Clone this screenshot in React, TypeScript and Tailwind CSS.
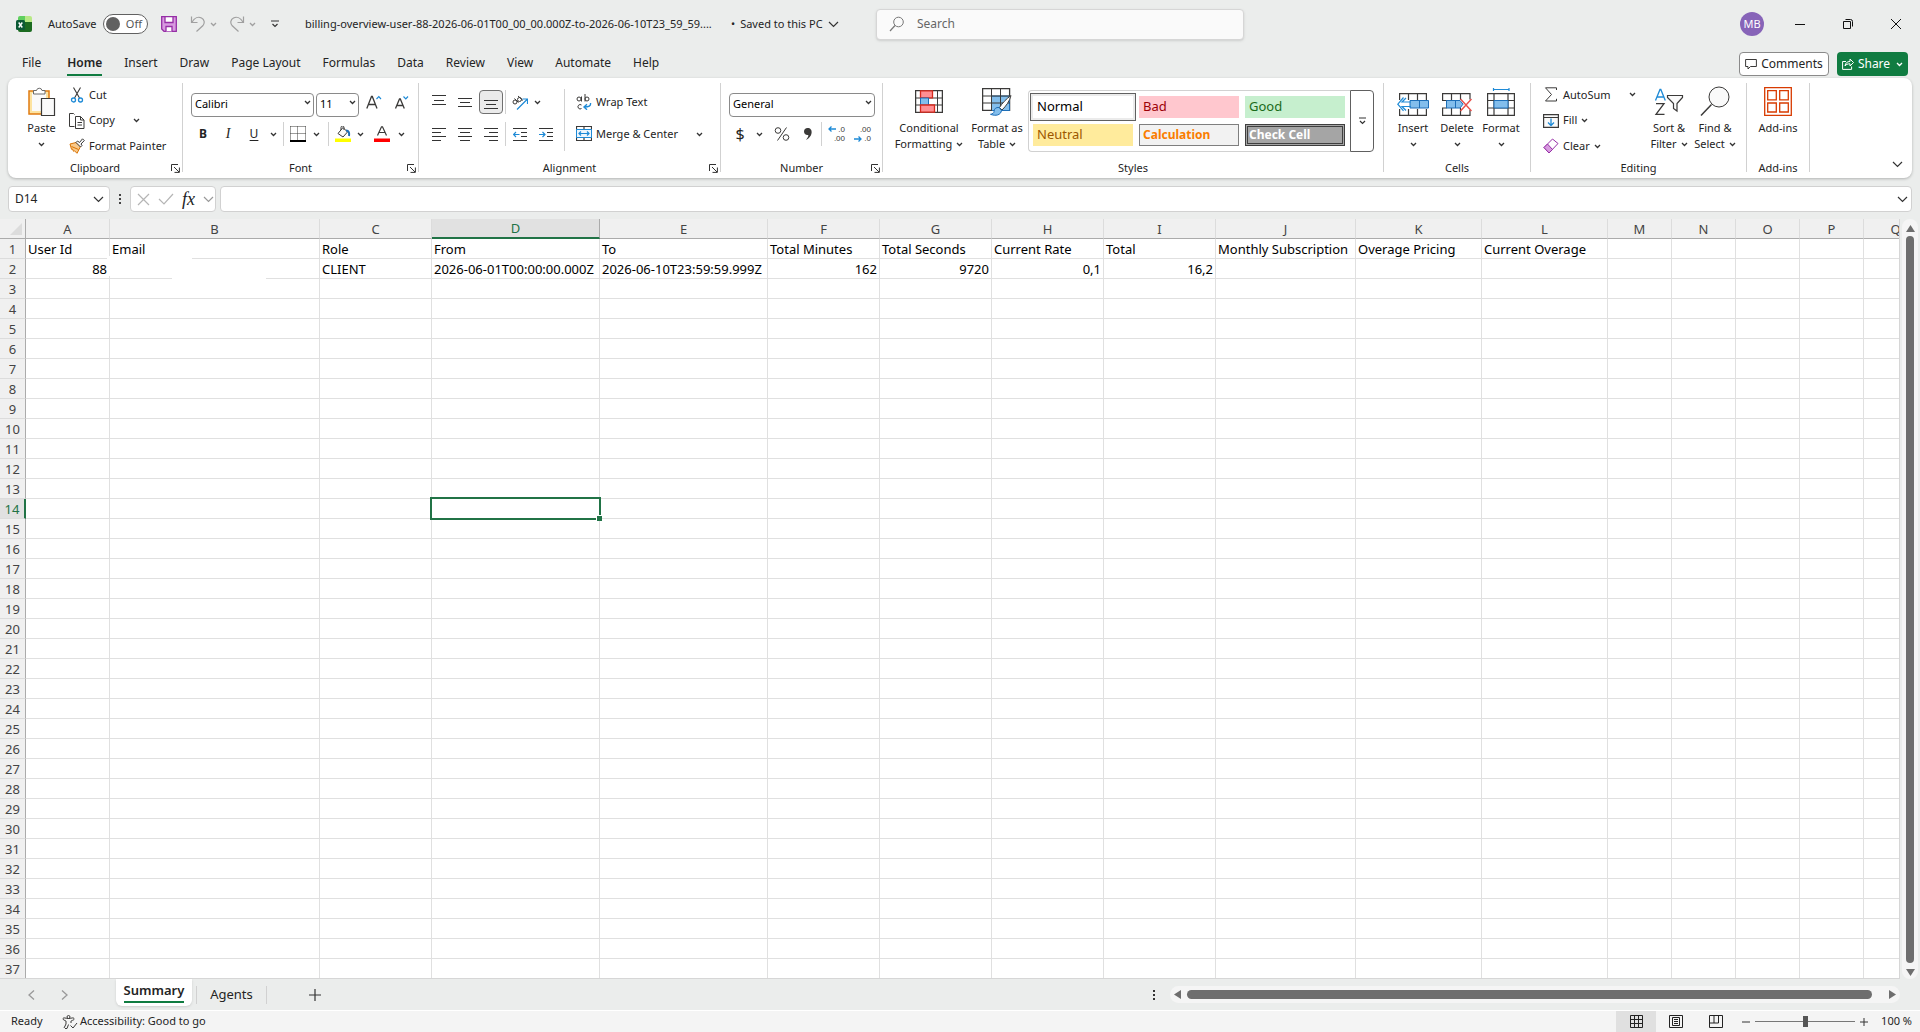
import type { ReactNode } from "react";
import clsx from "clsx";

const COLUMNS = [
  { name: "A", width: "w-[84px]" },
  { name: "B", width: "w-[210px]" },
  { name: "C", width: "w-[112px]" },
  { name: "D", width: "w-[168px]" },
  { name: "E", width: "w-[168px]" },
  { name: "F", width: "w-[112px]" },
  { name: "G", width: "w-[112px]" },
  { name: "H", width: "w-[112px]" },
  { name: "I", width: "w-[112px]" },
  { name: "J", width: "w-[140px]" },
  { name: "K", width: "w-[126px]" },
  { name: "L", width: "w-[126px]" },
  { name: "M", width: "w-16" },
  { name: "N", width: "w-16" },
  { name: "O", width: "w-16" },
  { name: "P", width: "w-16" },
  { name: "Q", width: "w-16" },
];

const CELLS: Record<string, string | number> = {
  A1: "User Id",
  B1: "Email",
  C1: "Role",
  D1: "From",
  E1: "To",
  F1: "Total Minutes",
  G1: "Total Seconds",
  H1: "Current Rate",
  I1: "Total",
  J1: "Monthly Subscription",
  K1: "Overage Pricing",
  L1: "Current Overage",
  A2: 88,
  C2: "CLIENT",
  D2: "2026-06-01T00:00:00.000Z",
  E2: "2026-06-10T23:59:59.999Z",
  F2: 162,
  G2: 9720,
  H2: "0,1",
  I2: "16,2",
};

const NUMERIC = ["A2", "F2", "G2", "H2", "I2"];
const ROWS = Array.from({ length: 37 }, (_, i) => i + 1);
const TABS = ["File", "Home", "Insert", "Draw", "Page Layout", "Formulas", "Data", "Review", "View", "Automate", "Help"];

/* ---------- Icons ---------- */

type IconProps = { w?: number; h?: number; className?: string; children: ReactNode };

const Icon = ({ w = 16, h = 16, className, children }: IconProps) => (
  <svg
    width={w}
    height={h}
    viewBox={`0 0 ${w} ${h}`}
    fill="none"
    stroke="#3b3a39"
    className={clsx("shrink-0", className)}
    aria-hidden="true"
  >
    {children}
  </svg>
);

const Chevron = ({ color = "#333" }: { color?: string }) => (
  <Icon w={7} h={5}>
    <path d="M1 1l2.5 2.5L6 1" stroke={color} strokeWidth="1.3" />
  </Icon>
);

const BigChevron = ({ color = "#333" }: { color?: string }) => (
  <Icon w={11} h={7}>
    <path d="M1 1l4.5 4.5L10 1" stroke={color} strokeWidth="1.2" />
  </Icon>
);

const ExcelLogo = () => (
  <Icon>
    <path d="M4 0h5v6H2V2a2 2 0 0 1 2-2z" fill="#5fcf5f" stroke="none" />
    <path d="M9 0h5a2 2 0 0 1 2 2v4H9z" fill="#b8e986" stroke="none" />
    <path d="M2 6h14v8a2 2 0 0 1-2 2H4a2 2 0 0 1-2-2z" fill="#1b6b20" stroke="none" />
    <rect x="0" y="4" width="9" height="10" rx="1.5" fill="#0b5a35" stroke="none" />
    <path d="M2.7 6.5l3.6 5M6.3 6.5l-3.6 5" stroke="#fff" strokeWidth="1.4" />
  </Icon>
);

const SaveIcon = () => (
  <Icon>
    <path d="M.7.7h14.6v14.6H3L.7 13z" fill="#d89be0" stroke="#962fa6" strokeWidth="1.3" />
    <path d="M4 .7h8v5.8H4z" fill="#fff" stroke="#962fa6" strokeWidth="1.3" />
    <path d="M5 15.3v-4.8h6v4.8" fill="#fff" stroke="#962fa6" strokeWidth="1.3" />
  </Icon>
);

const UndoIcon = ({ flip }: { flip?: boolean }) => (
  <Icon className={flip ? "-scale-x-100" : undefined}>
    <path d="M1.5.5v6h6M2 6.2C4.5 1.5 8.5.5 11.500 2c3 1.6 3.5 5 1.5 7.500L6.5 15.5" stroke="#a0a0a0" strokeWidth="1.2" />
  </Icon>
);

const PasteIcon = () => (
  <Icon w={28} h={31}>
    <path d="M1 5h20v23H1z" fill="#fde3a0" stroke="#e07b10" strokeWidth="1.5" />
    <path d="M4 7h14v18H4z" fill="#fafafa" stroke="none" />
    <path d="M5.5 8V4.500h3a2.8 2.8 0 0 1 5.5 0h3V8z" fill="#fff" stroke="#6b6b6b" />
    <path d="M13.5 12.5h13v17h-13z" fill="#fafafa" strokeWidth="1.2" />
  </Icon>
);

const CutIcon = () => (
  <Icon>
    <path d="M4.500.5l6 10.5M11.500.5l-6 10.5" strokeWidth="1.1" />
    <circle cx="4.5" cy="13" r="2" stroke="#1e8ad6" strokeWidth="1.3" />
    <circle cx="11.5" cy="13" r="2" stroke="#1e8ad6" strokeWidth="1.3" />
  </Icon>
);

const CopyIcon = () => (
  <Icon>
    <path d="M5.500 13.5h-5V.5h4l1 1M6.500 3.5h5l3.500 3.500v8.500H6.500z" />
    <path d="M11.500 3.500V7H15M8.500 9.500h4.500M8.500 12h4.500" />
  </Icon>
);

const PainterIcon = () => (
  <Icon>
    <path d="M1 6l6-1.5 4.500 4L8 15.300 5.500 12.800l-1 .5L3.500 11l-1 .3z" fill="#f9c98a" stroke="#d97200" />
    <path d="M2.500 8.500l7 3" stroke="#d97200" />
    <path d="M7 4.500L8.500 3l2 1.500L13.500.8l1.800 1.800-3.300 3.400 1 1.500L11.500 9z" fill="#fafafa" />
  </Icon>
);

const BordersIcon = () => (
  <Icon>
    <path d="M.5.5h15M.5 7.5h15M.5.5v14M7.5.5v14M15.5.5v14" strokeDasharray="1 1" />
    <path d="M0 15h16" stroke="#000" strokeWidth="2" />
  </Icon>
);

const FillIcon = () => (
  <Icon>
    <path d="M3 7.5l5-6 4.500 4.500-4.500 5z" fill="#fafafa" />
    <path d="M6 4V1.500a1.500 1.500 0 0 1 3 0V4" />
    <path d="M11 4.500c3 0 3.500 2.500 3 5.500" stroke="#1e6fb8" strokeWidth="2" />
    <path d="M0 12.500h16V16H0z" fill="#ff0" stroke="none" />
  </Icon>
);

const FontColorIcon = () => (
  <Icon>
    <path d="M3.500 9.500L7.500.8h1l4 8.700M5 6.500h6" strokeWidth="1.200" />
    <path d="M0 12.500h16V16H0z" fill="#f00" stroke="none" />
  </Icon>
);

const FontSizeIcon = ({ small }: { small?: boolean }) => (
  <Icon w={16} h={15}>
    {small ? (
      <>
        <path d="M1.5 13.500L5.500 4h.8l4 9.500M3 10.500h6" strokeWidth="1.300" />
        <path d="M9.500 1.500l2.300 2.300L14 1.500" stroke="#1e8ad6" strokeWidth="1.200" />
      </>
    ) : (
      <>
        <path d="M.8 13.500l4.700-12h.8l4.700 12M2.500 9.500h7" strokeWidth="1.300" />
        <path d="M10.500 4l2.300-2.300L15 4" stroke="#1e8ad6" strokeWidth="1.200" />
      </>
    )}
  </Icon>
);

const LinesIcon = ({ d }: { d: string }) => (
  <Icon w={14} h={14}>
    <path d={d} stroke="#333" />
  </Icon>
);

const OrientationIcon = () => (
  <Icon>
    <circle cx="3" cy="8" r="2" />
    <path d="M2.5 4.500l4 4M6 2l5 4.500" />
    <circle cx="7.5" cy="5.5" r="2" />
    <path d="M5 15.500L15.500 5M10.500 5h5v5" stroke="#1e8ad6" strokeWidth="1.200" />
  </Icon>
);

const IndentIcon = ({ increase }: { increase?: boolean }) => (
  <Icon w={14} h={14}>
    <path d="M0 1.500h14M8 5.500h6M8 9.500h6M0 13.500h14" stroke="#333" />
    <path
      d={increase ? "M0 7.500h6M3.500 5l2.500 2.500L3.500 10" : "M.5 7.500h6M3 5L.5 7.500 3 10"}
      stroke="#1e8ad6"
      strokeWidth="1.200"
    />
  </Icon>
);

const WrapIcon = () => (
  <Icon>
    <circle cx="3" cy="5" r="2" />
    <path d="M5.500 2.500v5M9 0v7.500" />
    <circle cx="11" cy="5" r="2" />
    <path d="M5.500 11a2.200 2.200 0 1 0 0 3.500" />
    <path d="M14.500 9c.5 3-1.500 4-6.500 4M11 10.300L8 13l3 2.700" stroke="#1e8ad6" strokeWidth="1.400" />
  </Icon>
);

const MergeIcon = () => (
  <Icon>
    <path d="M.5.5h15v14H.5zM8 .5v3M8 11.500v3" strokeWidth="1.200" />
    <path d="M.5 3.500h15v8H.5z" fill="#eef6fc" stroke="#1e8ad6" />
    <path d="M3 7.500h10M5 5.500l-2 2 2 2M11 5.500l2 2-2 2" stroke="#1e8ad6" strokeWidth="1.200" />
  </Icon>
);

const PercentIcon = () => (
  <Icon w={16} h={16}>
    <circle cx="4" cy="4.500" r="2.800" />
    <circle cx="12" cy="11.500" r="2.800" />
    <path d="M12.500 1.500l-9 13" />
  </Icon>
);

const CommaIcon = () => (
  <Icon w={10} h={14}>
    <path
      d="M4.500 1C7.500 1 9 3 8.600 6c-.4 3-2.600 5.500-5.600 7 1.500-2 2.500-3.500 2.300-5C3 8.500 1 7 1 4.500 1 2.500 2.500 1 4.500 1z"
      fill="#3b3a39"
      stroke="none"
    />
  </Icon>
);

const DecimalIcon = ({ decrease }: { decrease?: boolean }) => (
  <span className="relative flex h-[18px] w-4 flex-col justify-between font-['Liberation_Sans',sans-serif] text-[8px] leading-[9px] text-[#3b3a39]">
    <span className="block text-right">{decrease ? ".00" : ".0"}</span>
    <span className="block text-right">{decrease ? ".0" : ".00"}</span>
    <svg
      viewBox="0 0 8 6"
      fill="none"
      className={clsx("absolute -left-px h-[6px] w-2", decrease ? "bottom-px" : "top-px")}
    >
      <path d={decrease ? "M0 3h7M4.500.5L7 3 4.500 5.500" : "M8 3H1M3.500.5L1 3l2.500 2.500"} stroke="#1e8ad6" strokeWidth="1.300" />
    </svg>
  </span>
);

const ConditionalIcon = () => (
  <Icon w={28} h={23}>
    <path d="M.6.6h26.800v21.800H.6z" fill="#fff" strokeWidth="1.300" />
    <path d="M0 8h28M0 15h28M5.500 0v23M22.500 0v23" />
    <path d="M5.500.8h12v7h-12z" fill="#ff8f93" stroke="#d62a1e" strokeWidth="1.300" />
    <path d="M5.500 8h8v7h-8z" fill="#83beec" stroke="#1e6fb8" />
    <path d="M5.500 15h14v7.200h-14z" fill="#ff8f93" stroke="#d62a1e" strokeWidth="1.300" />
  </Icon>
);

const TableIcon = () => (
  <Icon w={30} h={28}>
    <path d="M.6.6h27v21.800H.6z" fill="#fff" strokeWidth="1.300" />
    <path d="M9.500 8h18v14.500h-18z" fill="#83beec" stroke="#1e6fb8" />
    <path d="M0 8h28M0 15h28M9.500 0v23M18.500 0v23" />
    <path d="M29 7.500c-5 3.500-9 8-11.500 12l2.500 2.500c4-4 7.500-8.500 9-14.500z" fill="#fff" />
    <path d="M17 19.500c-3-.5-5 1.500-5 4 0 1.500-1.500 2.500-3.500 2.800 5 2 10.500 1 11-4z" fill="#83beec" stroke="#1e6fb8" />
  </Icon>
);

const InsertIcon = () => (
  <Icon w={32} h={28}>
    <path d="M2.600 5.600h26.800v21.800H2.600zM11.500 5v22M20.500 5v22" strokeWidth="1.200" />
    <path d="M0 12h32v9H0z" fill="#fff" stroke="none" />
    <path d="M13 12.500h18.500V20H13z" fill="#83beec" stroke="#1e6fb8" />
    <path d="M22.500 12.500V20" stroke="#1e6fb8" />
    <path d="M14 14H5l4-4M14 18.500H5l4 4M6.500 9.500L.8 16.200l5.700 6.700" stroke="#1e8ad6" strokeWidth="1.200" />
  </Icon>
);

const DeleteIcon = () => (
  <Icon w={30} h={28}>
    <path
      d="M.6 12.500V5.600H28v6M.6 20v7.400H28V22M9.500 5v7M18.500 5v7M9.500 20v7.500M18.500 20v7.500M0 12.500h5M0 20h5"
      strokeWidth="1.200"
    />
    <path d="M4.500 12.500H18l3 3.700-3 3.800H4.500z" fill="#83beec" stroke="#1e6fb8" />
    <path d="M13.500 12.500V20" stroke="#1e6fb8" />
    <path d="M18.500 11l11 12M29.500 11l-11 12" stroke="#e8504a" strokeWidth="1.400" />
  </Icon>
);

const FormatIcon = () => (
  <Icon w={28} h={28}>
    <path d="M6.500 0v3M22 0v3M6.500 1.500H22" stroke="#1e8ad6" strokeWidth="1.200" />
    <path d="M.6 5.600h26.800v21.800H.6zM7 5v22M21 5v22M0 12.500h28M0 20h28" strokeWidth="1.200" />
    <path d="M7 12.500h14V20H7z" fill="#83beec" stroke="#1e6fb8" />
  </Icon>
);

const SumIcon = () => (
  <Icon w={16} h={15}>
    <path d="M13.500 3V.8h-11l6 6.700-6 6.500h11v-2.200" />
  </Icon>
);

const FillDownIcon = () => (
  <Icon w={16} h={14}>
    <path d="M.6.6h14.800v12.800H.6zM.5 3.500h15" fill="#fafafa" strokeWidth="1.200" />
    <path d="M8 4.500v7M5 8.500l3 3 3-3" stroke="#1e8ad6" strokeWidth="1.300" />
  </Icon>
);

const EraserIcon = () => (
  <Icon>
    <path d="M1 9.500L9.500 1 15 5.500 6 15z" fill="#fff" stroke="#962fa6" />
    <path d="M1 9.500L4.500 6l5 5.500L6 15z" fill="#d89be0" stroke="#962fa6" />
  </Icon>
);

const SortFilterIcon = () => (
  <Icon w={30} h={28}>
    <path d="M1.500 12.500L6 1.500h.8l4.500 11M3 9h7" stroke="#1e8ad6" strokeWidth="1.300" />
    <path d="M2 15.600h8L2 26.400h8.500" strokeWidth="1.300" />
    <path d="M13.500 7.500h15v2l-5.500 6V23l-3.500-2.500v-5l-6-6z" fill="#fafafa" strokeWidth="1.200" />
  </Icon>
);

const FindIcon = () => (
  <Icon w={30} h={31}>
    <circle cx="19" cy="11" r="10" fill="#fafafa" />
    <path d="M11.500 18.500L1 29.500" strokeWidth="1.500" />
  </Icon>
);

const AddInsIcon = () => (
  <Icon w={28} h={29}>
    <path
      d="M.7.7h26.600v27.600H.7zM3.700 3.700h8.600v9.100H3.700zM15.700 3.700h8.600v9.100h-8.600zM3.700 16h8.600v9H3.700zM15.700 16h8.600v9h-8.600z"
      stroke="#d83b01"
      strokeWidth="1.300"
    />
  </Icon>
);

const MagnifierIcon = () => (
  <Icon>
    <circle cx="9.500" cy="6" r="4.800" stroke="#777" />
    <path d="M6 9.500L1 15" stroke="#777" strokeWidth="1.200" />
  </Icon>
);

const Launcher = () => (
  <Icon w={9} h={9}>
    <path d="M.5 7V.5H7M3 3l5 5M8.400 3.500v4.900H3.500" stroke="#333" />
  </Icon>
);

/* ---------- Ribbon parts ---------- */

const Separator = ({ className = "h-[89px]" }: { className?: string }) => (
  <div className={clsx("w-px shrink-0 bg-[#d1d1d1]", className)} />
);

type GroupProps = { label: string; width: string; launcher?: boolean; children: ReactNode };

const Group = ({ label, width, launcher, children }: GroupProps) => (
  <>
    <section aria-label={label} className={clsx("flex shrink-0 flex-col", width)}>
      <div className="flex h-[77px]">{children}</div>
      <div className="relative h-4 text-center text-[11px] leading-4">
        {label}
        {launcher && (
          <button aria-label={`${label} settings`} className="absolute right-0.5 top-1">
            <Launcher />
          </button>
        )}
      </div>
    </section>
    <Separator />
  </>
);

type ToolProps = { label: string; width?: string; active?: boolean; children: ReactNode };

const Tool = ({ label, width = "w-[26px]", active, children }: ToolProps) => (
  <button
    aria-label={label}
    className={clsx(
      "flex h-6 shrink-0 items-center justify-center",
      width,
      active && "rounded border border-[#707070] bg-[#ebebeb]"
    )}
  >
    {children}
  </button>
);

type BigToolProps = { icon: ReactNode; width: string; lines: string[]; chevron?: "below" | "inline" };

const BigTool = ({ icon, width, lines, chevron }: BigToolProps) => (
  <button className={clsx("flex shrink-0 flex-col items-center text-[11px] leading-4", width)}>
    <span className="flex h-[37px] items-center justify-center">{icon}</span>
    {lines.map((line, i) => (
      <span key={line} className="flex items-center gap-1 whitespace-nowrap">
        {line}
        {chevron === "inline" && i === lines.length - 1 && <Chevron />}
      </span>
    ))}
    {chevron === "below" && (
      <span className="flex h-4 items-center">
        <Chevron />
      </span>
    )}
  </button>
);

const SmallTool = ({ icon, label, chevron }: { icon: ReactNode; label: string; chevron?: "near" | "far" }) => (
  <button className="flex h-[26px] items-center gap-1 whitespace-nowrap pb-0.5 text-[11px]">
    {icon}
    {label}
    {chevron && (
      <span className={chevron === "far" ? "ml-[14px]" : undefined}>
        <Chevron />
      </span>
    )}
  </button>
);

const Combo = ({ label, value, width }: { label: string; value: string; width: string }) => (
  <div className={clsx("relative h-6 shrink-0", width)}>
    <select
      aria-label={label}
      defaultValue={value}
      className="h-6 w-full appearance-none rounded border border-[#8a8a8a] bg-white pb-0.5 pl-[3px] text-[11px] text-black"
    >
      <option>{value}</option>
    </select>
    <span className="pointer-events-none absolute right-[3px] top-[10px]">
      <Chevron />
    </span>
  </div>
);

const ToolRows = ({ className, children }: { className?: string; children: ReactNode }) => (
  <div className={clsx("flex flex-col gap-2 pt-[7px]", className)}>{children}</div>
);

/* ---------- Sections ---------- */

const TitleBar = () => (
  <header className="flex h-12 shrink-0 items-center pl-4 text-[11px]">
    <ExcelLogo />
    <label htmlFor="autosave" className="ml-4 w-[55px]">
      AutoSave
    </label>
    <div className="relative h-5 w-[45px]">
      <input
        id="autosave"
        type="checkbox"
        className="block h-5 w-[45px] appearance-none rounded-full border border-[#616161] bg-white before:m-[2px] before:block before:h-[14px] before:w-[14px] before:rounded-full before:bg-[#616161]"
      />
      <span className="pointer-events-none absolute right-[6px] top-0 leading-5 text-[#555]">Off</span>
    </div>
    <button aria-label="Save" className="ml-[13px]">
      <SaveIcon />
    </button>
    <button aria-label="Undo" className="ml-[13px] flex items-center gap-1">
      <UndoIcon />
      <Chevron color="#a0a0a0" />
    </button>
    <button aria-label="Redo" className="ml-3 flex items-center gap-1">
      <UndoIcon flip />
      <Chevron color="#a0a0a0" />
    </button>
    <button aria-label="Customize Quick Access Toolbar" className="ml-[15px]">
      <Icon w={8} h={8}>
        <path d="M0 1h8M1.500 4L4 6.500 6.500 4" stroke="#333" strokeWidth="1.200" />
      </Icon>
    </button>
    <p className="ml-[26px] w-[422px] overflow-hidden whitespace-nowrap">
      billing-overview-user-88-2026-06-01T00_00_00.000Z-to-2026-06-10T23_59_59....
    </p>
    <button className="ml-1 flex w-[145px] items-center gap-[5px] whitespace-nowrap">
      <span>•</span>
      <span>Saved to this PC</span>
      <BigChevron />
    </button>
    <div className="flex h-[31px] w-[368px] items-center gap-3 rounded border border-[#d6d6d6] bg-[#fafafa] pl-3 shadow-sm">
      <MagnifierIcon />
      <input
        aria-label="Search"
        placeholder="Search"
        className="min-w-0 flex-1 bg-transparent text-xs placeholder:text-[#666]"
      />
    </div>
    <div className="ml-auto flex items-center">
      <span className="flex h-6 w-6 items-center justify-center rounded-full bg-[#8764b8] text-white">MB</span>
      <button aria-label="Minimize" className="flex w-[72px] justify-center">
        <Icon w={10} h={10}>
          <path d="M0 5.500h10" stroke="#111" />
        </Icon>
      </button>
      <button aria-label="Restore" className="flex w-6 justify-center">
        <Icon w={10} h={10}>
          <path d="M.5 2.500h7v7h-7zM2.500.5h5a2 2 0 0 1 2 2v5" stroke="#111" />
        </Icon>
      </button>
      <button aria-label="Close" className="ml-3 flex w-12 justify-center">
        <Icon w={10} h={10}>
          <path d="M0 0l10 10M10 0L0 10" stroke="#111" />
        </Icon>
      </button>
    </div>
  </header>
);

const TabBar = () => (
  <nav className="flex h-[30px] shrink-0 items-center pl-[11px] pr-3 pt-0.5">
    {TABS.map((tab) => (
      <button key={tab} className={clsx("px-[11px] text-xs", tab === "File" && "mr-1")}>
        <span
          className={clsx(
            "block border-b-2 leading-[22px]",
            tab === "Home" ? "border-[#107c41] font-semibold" : "border-transparent"
          )}
        >
          {tab}
        </span>
      </button>
    ))}
    <button className="ml-auto flex h-6 w-[90px] items-center justify-center gap-1 rounded border border-[#8a8a8a] bg-white text-xs">
      <Icon w={12} h={12}>
        <path d="M.6 1.500h10.800v7H5.500L3 11V8.500H.6z" />
      </Icon>
      Comments
    </button>
    <button className="ml-2 flex h-6 w-[71px] items-center justify-center gap-1 rounded bg-[#107c41] text-xs text-white">
      <Icon w={12} h={12}>
        <path
          d="M4 3.500H.6v7.900h9V8.500M3 8c.5-3 2-4.500 5-4.500V1l3.500 3.500L8 8V5.800C5.500 5.800 4 6.500 3 8z"
          stroke="#fff"
        />
      </Icon>
      Share
      <span className="ml-0.5">
        <Chevron color="#fff" />
      </span>
    </button>
  </nav>
);

const StylesGallery = () => (
  <div className="mt-[7px] flex h-[62px] shrink-0">
    <div className="grid w-[322px] grid-cols-[100px_100px_100px] grid-rows-[22px_22px] gap-[6px] rounded-l border border-r-0 border-[#d1d1d1] pl-1 pt-[5px] text-[13px] leading-5">
      <button className="bg-white pb-0.5 pl-1 text-left text-black outline outline-offset-2 outline-[#606060] ring-2 ring-[#ebebeb]">
        Normal
      </button>
      <button className="bg-[#ffc7ce] pb-0.5 pl-1 text-left text-[#9c0006]">Bad</button>
      <button className="bg-[#c6efce] pb-0.5 pl-1 text-left text-[#1a6b1a]">Good</button>
      <button className="bg-[#ffeb9c] pb-0.5 pl-1 text-left text-[#9c5700]">Neutral</button>
      <button className="border border-[#7f7f7f] bg-[#f2f2f2] pl-[3px] text-left text-xs font-bold text-[#fa7d00]">
        Calculation
      </button>
      <button className="border-[3px] border-double border-[#3f3f3f] bg-[#a5a5a5] pl-px text-left text-xs font-bold leading-4 text-white">
        Check Cell
      </button>
    </div>
    <button
      aria-label="More styles"
      className="flex w-6 items-center justify-center rounded-r border border-[#606060]"
    >
      <Icon w={7} h={8}>
        <path d="M0 1h7M1 4l2.500 2.500L6 4" stroke="#333" strokeWidth="1.200" />
      </Icon>
    </button>
  </div>
);

const Ribbon = () => (
  <div className="mx-2 flex h-[100px] shrink-0 rounded-lg bg-white pt-[5px] shadow-[0_1px_3px_rgba(0,0,0,0.25)]">
    <Group label="Clipboard" width="w-[174px]" launcher>
      <div className="flex w-[61px] shrink-0 justify-center pl-[6px]">
        <BigTool width="w-12" icon={<PasteIcon />} lines={["Paste"]} chevron="below" />
      </div>
      <div className="flex flex-col">
        <SmallTool icon={<CutIcon />} label="Cut" />
        <SmallTool icon={<CopyIcon />} label="Copy" chevron="far" />
        <SmallTool icon={<PainterIcon />} label="Format Painter" />
      </div>
    </Group>

    <Group label="Font" width="w-[235px]" launcher>
      <ToolRows className="pl-2">
        <div className="flex gap-0.5">
          <Combo label="Font" value="Calibri" width="w-[123px]" />
          <Combo label="Font size" value="11" width="w-[43px]" />
          <Tool label="Increase font size">
            <FontSizeIcon />
          </Tool>
          <Tool label="Decrease font size">
            <FontSizeIcon small />
          </Tool>
        </div>
        <div className="flex">
          <Tool label="Bold" width="w-6">
            <b className="text-xs">B</b>
          </Tool>
          <Tool label="Italic">
            <i className="font-['Liberation_Serif',serif] text-sm">I</i>
          </Tool>
          <Tool label="Underline">
            <u className="text-xs underline-offset-2">U</u>
          </Tool>
          <Tool label="Underline options" width="w-3">
            <Chevron />
          </Tool>
          <Separator className="mx-1 h-6" />
          <Tool label="Borders" width="w-5">
            <BordersIcon />
          </Tool>
          <Tool label="Border options" width="w-4">
            <Chevron />
          </Tool>
          <Separator className="mx-1 h-6" />
          <Tool label="Fill color" width="w-5">
            <FillIcon />
          </Tool>
          <Tool label="Fill color options" width="w-3.5">
            <Chevron />
          </Tool>
          <Tool label="Font color" width="w-[30px]">
            <FontColorIcon />
          </Tool>
          <Tool label="Font color options" width="w-2">
            <Chevron />
          </Tool>
        </div>
      </ToolRows>
    </Group>

    <Group label="Alignment" width="w-[301px]" launcher>
      <ToolRows className="w-[145px] shrink-0 pl-[7px]">
        <div className="flex">
          <Tool label="Top align">
            <LinesIcon d="M0 .5h14M2 5.500h10M0 9.500h14" />
          </Tool>
          <Tool label="Middle align">
            <LinesIcon d="M0 3.500h14M2 7.500h10M0 11.500h14" />
          </Tool>
          <Tool label="Bottom align" width="w-6 mx-px" active>
            <LinesIcon d="M0 5.500h14M2 9.500h10M0 13.500h14" />
          </Tool>
          <Separator className="mx-px h-6" />
          <Tool label="Orientation">
            <OrientationIcon />
          </Tool>
          <Tool label="Orientation options" width="w-2">
            <Chevron />
          </Tool>
        </div>
        <div className="flex">
          <Tool label="Align left">
            <LinesIcon d="M0 1.500h14M0 5.500h9M0 9.500h14M0 13.500h9" />
          </Tool>
          <Tool label="Center">
            <LinesIcon d="M0 1.500h14M2 5.500h10M0 9.500h14M2 13.500h10" />
          </Tool>
          <Tool label="Align right">
            <LinesIcon d="M0 1.500h14M5 5.500h9M0 9.500h14M5 13.500h9" />
          </Tool>
          <Separator className="mx-px h-6" />
          <Tool label="Decrease indent">
            <IndentIcon />
          </Tool>
          <Tool label="Increase indent">
            <IndentIcon increase />
          </Tool>
        </div>
      </ToolRows>
      <Separator className="mt-[6px] h-[62px]" />
      <div className="flex flex-col gap-[6px] pl-[11px] pt-[7px]">
        <SmallTool icon={<WrapIcon />} label="Wrap Text" />
        <SmallTool icon={<MergeIcon />} label="Merge & Center" chevron="far" />
      </div>
    </Group>

    <Group label="Number" width="w-[161px]" launcher>
      <ToolRows className="pl-2">
        <Combo label="Number format" value="General" width="w-[146px]" />
        <div className="flex">
          <Tool label="Accounting format" width="w-[22px]">
            <span className="text-base">$</span>
          </Tool>
          <Tool label="Accounting options" width="w-4">
            <Chevron />
          </Tool>
          <Tool label="Percent style" width="w-[30px]">
            <PercentIcon />
          </Tool>
          <Tool label="Comma style" width="w-[22px]">
            <CommaIcon />
          </Tool>
          <Separator className="mx-0.5 h-6" />
          <Tool label="Increase decimal">
            <DecimalIcon />
          </Tool>
          <Tool label="Decrease decimal">
            <DecimalIcon decrease />
          </Tool>
        </div>
      </ToolRows>
    </Group>

    <Group label="Styles" width="w-[500px]">
      <div className="flex w-[145px] shrink-0 pl-[6px]">
        <BigTool width="w-20" icon={<ConditionalIcon />} lines={["Conditional", "Formatting"]} chevron="inline" />
        <BigTool width="w-[56px]" icon={<TableIcon />} lines={["Format as", "Table"]} chevron="inline" />
      </div>
      <StylesGallery />
    </Group>

    <Group label="Cells" width="w-[146px]">
      <div className="flex pl-[7px]">
        <BigTool width="w-11" icon={<InsertIcon />} lines={["Insert"]} chevron="below" />
        <BigTool width="w-11" icon={<DeleteIcon />} lines={["Delete"]} chevron="below" />
        <BigTool width="w-11" icon={<FormatIcon />} lines={["Format"]} chevron="below" />
      </div>
    </Group>

    <Group label="Editing" width="w-[215px]">
      <div className="flex w-[114px] shrink-0 flex-col pl-3">
        <SmallTool icon={<SumIcon />} label="AutoSum" chevron="far" />
        <SmallTool icon={<FillDownIcon />} label="Fill" chevron="near" />
        <SmallTool icon={<EraserIcon />} label="Clear" chevron="near" />
      </div>
      <BigTool width="w-12" icon={<SortFilterIcon />} lines={["Sort &", "Filter"]} chevron="inline" />
      <BigTool width="w-11" icon={<FindIcon />} lines={["Find &", "Select"]} chevron="inline" />
    </Group>

    <Group label="Add-ins" width="w-[62px]">
      <BigTool width="w-full" icon={<AddInsIcon />} lines={["Add-ins"]} />
    </Group>

    <button aria-label="Collapse ribbon" className="mb-[10px] ml-auto mr-[9px] self-end">
      <BigChevron />
    </button>
  </div>
);

const FormulaBar = () => (
  <div className="mx-2 mt-2 flex h-[26px] shrink-0 items-center">
    <div className="flex h-[26px] w-[102px] items-center rounded border border-[#d1d1d1] bg-white pl-[6px] pr-[5px]">
      <input aria-label="Name Box" defaultValue="D14" className="min-w-0 flex-1 text-xs" />
      <BigChevron />
    </div>
    <Icon w={20} h={12}>
      <path d="M9 2h2M9 6h2M9 10h2" stroke="#444" strokeWidth="2" />
    </Icon>
    <div className="flex h-[26px] w-[86px] items-center justify-between rounded border border-[#d1d1d1] bg-white pl-[6px] pr-px">
      <button aria-label="Cancel">
        <Icon w={13} h={13}>
          <path d="M1 1l11 11M12 1L1 12" stroke="#b5b5b5" strokeWidth="1.200" />
        </Icon>
      </button>
      <button aria-label="Enter">
        <Icon w={16} h={12}>
          <path d="M1 6l5 5L15 1" stroke="#b5b5b5" strokeWidth="1.200" />
        </Icon>
      </button>
      <button
        aria-label="Insert function"
        className="font-['Liberation_Serif',serif] text-lg italic leading-5 text-[#222]"
      >
        fx
      </button>
      <BigChevron color="#999" />
    </div>
    <div className="ml-1 flex h-[26px] flex-1 items-center rounded border border-[#d1d1d1] bg-white pr-[3px]">
      <input aria-label="Formula Bar" className="min-w-0 flex-1 px-2 text-xs" />
      <BigChevron />
    </div>
  </div>
);

const Cell = ({ id }: { id: string }) => (
  <td
    className={clsx(
      "relative h-5 whitespace-nowrap border-b border-r border-[#e0e0e0] bg-white px-0.5 pb-0 pt-0.5 leading-[17px]",
      NUMERIC.includes(id) && "text-right"
    )}
  >
    {CELLS[id]}
    {/* Hidden e-mail address */}
    {id === "B2" && (
      <>
        <span className="absolute -left-[3px] -top-[3px] h-5 w-[85px] bg-white" />
        <span className="absolute left-[62px] top-px h-5 w-[94px] bg-white" />
      </>
    )}
    {/* Active cell outline with the fill handle */}
    {id === "D14" && (
      <span className="absolute -bottom-0.5 -left-0.5 -right-0.5 -top-0.5 z-10 border-2 border-[#217346]">
        <span className="absolute -bottom-[3px] -right-[3px] h-[6px] w-[6px] border-l border-t border-white bg-[#217346]" />
      </span>
    )}
  </td>
);

const Grid = () => (
  <div className="min-w-0 flex-1 overflow-hidden border-b border-r border-[#d6d6d6] bg-white">
    <table className="w-max table-fixed border-separate border-spacing-0 text-[13px] text-black">
      <thead>
        <tr>
          <th aria-label="Select all" className="h-5 w-[26px] border-b border-r border-[#ababab] bg-[#f0f0f0] p-0">
            <Icon w={12} h={12} className="ml-[10px]">
              <path d="M12 0v12H0z" fill="#dcdcdc" stroke="none" />
            </Icon>
          </th>
          {COLUMNS.map((col) => (
            <th
              key={col.name}
              className={clsx(
                "h-5 border-r p-0 text-[13px] font-normal leading-[18px]",
                col.width,
                col.name === "D"
                  ? "border-b-2 border-b-[#217346] border-r-[#ababab] bg-[#e1e1e1] text-[#217346]"
                  : "border-b border-b-[#ababab] border-r-[#dcdcdc] bg-[#f0f0f0] text-[#444]"
              )}
            >
              {col.name}
            </th>
          ))}
        </tr>
      </thead>
      <tbody>
        {ROWS.map((row) => (
          <tr key={row}>
            <th
              className={clsx(
                "h-5 border-b border-b-[#dcdcdc] p-0 pt-0.5 text-[13px] font-normal leading-[17px]",
                row === 14
                  ? "border-r-2 border-r-[#217346] bg-[#e1e1e1] text-[#217346]"
                  : "border-r border-r-[#ababab] bg-[#f0f0f0] text-[#444]"
              )}
            >
              {row}
            </th>
            {COLUMNS.map((col) => (
              <Cell key={col.name} id={`${col.name}${row}`} />
            ))}
          </tr>
        ))}
      </tbody>
    </table>
  </div>
);

const VerticalScroll = () => (
  <div className="mx-0.5 flex w-4 shrink-0 flex-col items-center rounded-full bg-[#f5f5f5] pb-[3px] pt-[6px]">
    <Icon w={9} h={7}>
      <path d="M4.500 0L9 7H0z" fill="#6e6e6e" stroke="none" />
    </Icon>
    <div className="my-1 w-2 flex-1 rounded-full bg-[#6e6e6e]" />
    <Icon w={9} h={7} className="mt-0.5">
      <path d="M4.500 7L9 0H0z" fill="#6e6e6e" stroke="none" />
    </Icon>
  </div>
);

const SheetTabs = () => (
  <div className="flex h-[31px] shrink-0 items-center pr-5 text-[13px]">
    <button aria-label="Previous sheet" className="ml-7">
      <Icon w={7} h={10}>
        <path d="M6 .5L1 5l5 4.500" stroke="#999" strokeWidth="1.300" />
      </Icon>
    </button>
    <button aria-label="Next sheet" className="ml-[26px]">
      <Icon w={7} h={10}>
        <path d="M1 .5L6 5 1 9.500" stroke="#999" strokeWidth="1.300" />
      </Icon>
    </button>
    <button className="ml-12 flex h-[27px] w-[76px] justify-center self-start rounded-b-md bg-white font-semibold shadow-sm">
      <span className="h-6 border-b-2 border-[#107c41] leading-[22px]">Summary</span>
    </button>
    <Separator className="ml-1 h-[18px]" />
    <button className="w-[69px]">Agents</button>
    <Separator className="h-[18px]" />
    <button aria-label="New sheet" className="ml-[42px]">
      <Icon w={12} h={12}>
        <path d="M6 0v12M0 6h12" stroke="#333" strokeWidth="1.200" />
      </Icon>
    </button>
    <div className="ml-auto flex items-center">
      <Icon w={4} h={12}>
        <path d="M1 2h2M1 6h2M1 10h2" stroke="#333" strokeWidth="2" />
      </Icon>
      <div className="ml-[14px] flex h-[17px] w-[38vw] items-center rounded-full bg-[#f5f5f5] px-1">
        <Icon w={8} h={9}>
          <path d="M0 4.500L7 0v9z" fill="#6e6e6e" stroke="none" />
        </Icon>
        <div className="ml-[5px] mr-4 h-[9px] flex-1 rounded-full bg-[#6e6e6e]" />
        <Icon w={8} h={9}>
          <path d="M8 4.500L1 0v9z" fill="#6e6e6e" stroke="none" />
        </Icon>
      </div>
    </div>
  </div>
);

const StatusBar = () => (
  <footer className="flex h-[22px] shrink-0 items-center border-t border-white bg-[#f4f4f4] pl-[11px] pr-2 text-[11px]">
    <span className="w-[51px]">Ready</span>
    <button className="flex items-center gap-0.5">
      <Icon w={16} h={14}>
        <circle cx="6.500" cy="2" r="1.500" />
        <path d="M1 3.500c1-1.500 2 0 5.500 0s4.500-1.500 5.500 0-2.500 2-3 2.500v2M4 6v3l-2 4M4 6C3.500 5.500.5 5 1 3.500M6.500 9.500L5 13.500H3M8.500 10.500l2.500 2.500 4-5" />
      </Icon>
      Accessibility: Good to go
    </button>
    <div className="ml-auto flex h-full items-center">
      <button aria-label="Normal view" className="flex h-full w-10 items-center justify-center bg-[#e0e0e0]">
        <Icon w={13} h={13}>
          <path d="M.5.5h12v12H.5zM4.500 0v13M8.500 0v13M0 4.500h13M0 8.500h13" stroke="#222" />
        </Icon>
      </button>
      <button aria-label="Page layout view" className="flex h-full w-10 items-center justify-center">
        <Icon w={14} h={13}>
          <path d="M.5.5h13v12H.5zM3.500 2.500h7v8h-7zM5 4.500h4M5 6.500h4M5 8.500h4" stroke="#222" />
        </Icon>
      </button>
      <button aria-label="Page break preview" className="flex h-full w-10 items-center justify-center">
        <Icon w={14} h={13}>
          <path d="M.5.5h13v12H.5zM.5 8h9V.5M5 .5V8" stroke="#222" />
        </Icon>
      </button>
      <button aria-label="Zoom out" className="ml-[6px]">
        <Icon w={8} h={8}>
          <path d="M0 4h8" stroke="#333" />
        </Icon>
      </button>
      <input
        type="range"
        aria-label="Zoom"
        defaultValue={50}
        className="mx-[5px] h-[11px] w-[100px] appearance-none bg-[linear-gradient(#777,#777)] bg-[length:100%_1px] bg-center bg-no-repeat [&::-webkit-slider-thumb]:h-[11px] [&::-webkit-slider-thumb]:w-[5px] [&::-webkit-slider-thumb]:appearance-none [&::-webkit-slider-thumb]:bg-[#555]"
      />
      <button aria-label="Zoom in">
        <Icon w={8} h={8}>
          <path d="M0 4h8M4 0v8" stroke="#333" />
        </Icon>
      </button>
      <span className="ml-3 w-8 whitespace-nowrap text-right">100 %</span>
    </div>
  </footer>
);

const App = () => {
  return (
    <div className="flex h-screen flex-col overflow-hidden bg-[#ebedec] font-['Noto_Sans',sans-serif] text-[#242424]">
      <TitleBar />
      <TabBar />
      <Ribbon />
      <FormulaBar />
      <main className="mt-[7px] flex min-h-0 flex-1">
        <Grid />
        <VerticalScroll />
      </main>
      <SheetTabs />
      <StatusBar />
    </div>
  );
};

export default App;
